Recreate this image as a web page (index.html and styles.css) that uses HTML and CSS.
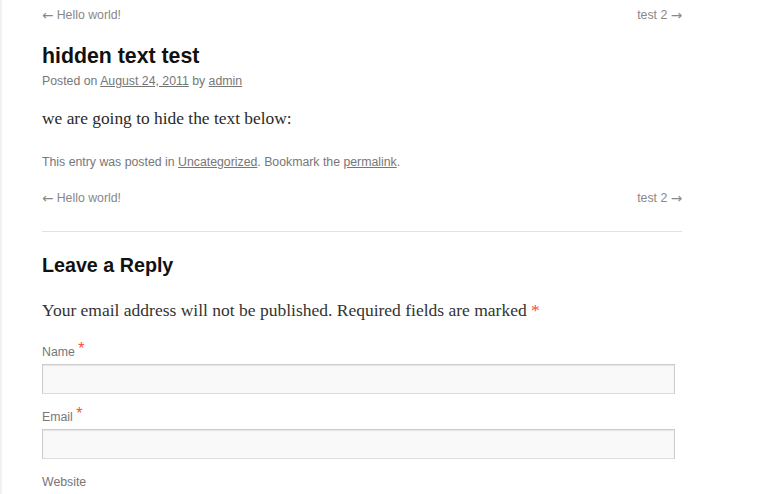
FILE: index.html
```html
<!DOCTYPE html>
<html>
<head>
<meta charset="utf-8">
<link rel="stylesheet" href="styles.css">
</head>
<body>
<div class="page">
  <div class="content">
    <nav class="nav nav-top">
      <a href="#"><span class="arrow">←</span> Hello world!</a>
      <a href="#">test 2 <span class="arrow">→</span></a>
    </nav>
    <h1 class="entry-title">hidden text test</h1>
    <div class="entry-meta">Posted on <a href="#">August 24, 2011</a> by <a href="#">admin</a></div>
    <p class="entry-body">we are going to hide the text below:</p>
    <div class="entry-footer">This entry was posted in <a href="#">Uncategorized</a>. Bookmark the <a href="#">permalink</a>.</div>
    <nav class="nav nav-bottom">
      <a href="#"><span class="arrow">←</span> Hello world!</a>
      <a href="#">test 2 <span class="arrow">→</span></a>
    </nav>
    <div class="respond">
      <h2 class="reply-title">Leave a Reply</h2>
      <p class="notes">Your email address will not be published. Required fields are marked <span class="req">*</span></p>
      <div class="fields">
        <div class="field">
          <label>Name <span class="req">*</span></label>
          <div class="input"></div>
        </div>
        <div class="field">
          <label>Email <span class="req">*</span></label>
          <div class="input"></div>
        </div>
        <div class="field">
          <label>Website</label>
        </div>
      </div>
    </div>
  </div>
</div>
</body>
</html>
```
FILE: styles.css
```css
html, body {
  margin: 0;
  padding: 0;
  background: #fff;
}
.page {
  border-left: 2px solid #f1f1f1;
  min-height: 494px;
  box-sizing: border-box;
}
.content {
  margin-left: 40px;
  width: 640px;
  font-family: "Liberation Sans", Arial, sans-serif;
}
a { color: inherit; }
.nav {
  display: flex;
  justify-content: space-between;
  font-size: 12.3px;
  line-height: 18px;
  color: #888;
}
.nav a { text-decoration: none; }
.arrow {
  font-family: "DejaVu Sans", sans-serif;
  font-size: 13.5px;
  line-height: 0;
  position: relative;
  top: 1px;
}
.nav-top { padding-top: 6px; }
.entry-title {
  margin: 19px 0 0;
  font-size: 21.3px;
  line-height: 26px;
  font-weight: bold;
  color: #111;
}
.entry-meta {
  margin-top: 3px;
  font-size: 12.3px;
  line-height: 18px;
  color: #777;
}
.entry-body {
  margin: 16px 0 0;
  font-family: "Liberation Serif", Georgia, serif;
  font-size: 17.4px;
  line-height: 24px;
  color: #2a2a2a;
}
.entry-footer {
  margin-top: 23px;
  font-size: 12.3px;
  line-height: 18px;
  color: #777;
}
.nav-bottom { margin-top: 18px; }
.respond {
  margin-top: 24px;
  border-top: 1px solid #e2e2e2;
}
.reply-title {
  margin: 20px 0 0;
  font-size: 19.7px;
  line-height: 26px;
  font-weight: bold;
  color: #111;
}
.notes {
  margin: 20px 0 0;
  font-family: "Liberation Serif", Georgia, serif;
  font-size: 17.5px;
  line-height: 24px;
  color: #333;
}
.req { color: #ff4b33; }
.fields { padding-top: 7px; }
.field {
  margin-top: 14px;
}
.field label {
  display: block;
  font-size: 12.3px;
  line-height: 18px;
  color: #777;
}
.field label .req {
  font-size: 16px;
  line-height: 0;
  position: relative;
  top: -2px;
}
.input {
  margin-top: 3px;
  width: 633px;
  height: 30px;
  box-sizing: border-box;
  border: 1px solid #ccc;
  border-bottom-color: #ddd;
  background: #f9f9f9;
  box-shadow: inset 0 1px 1px rgba(0,0,0,0.08);
}
```
